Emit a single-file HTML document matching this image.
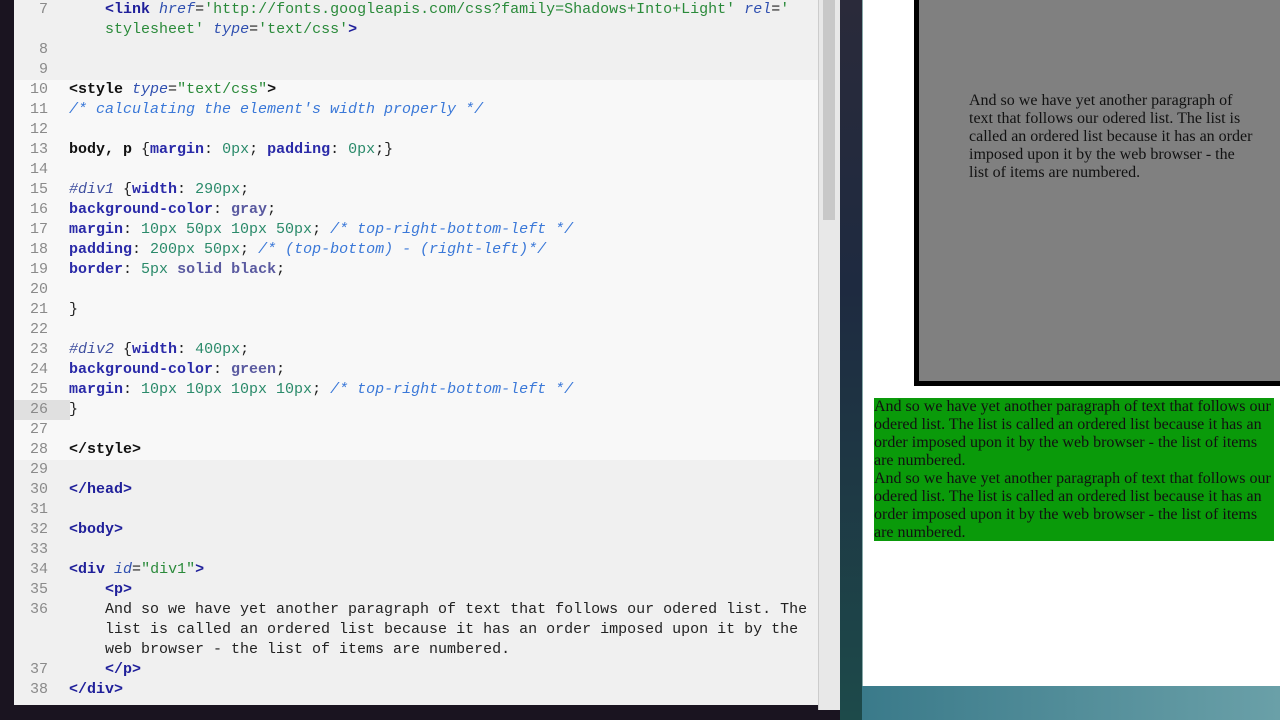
<!DOCTYPE html>
<html><head><meta charset="utf-8"><style>
*{margin:0;padding:0;box-sizing:border-box}
body{width:1280px;height:720px;overflow:hidden;background:#1a1420;position:relative;font-family:"Liberation Mono",monospace}
#ed{position:absolute;left:14px;top:0;width:804px;height:705px;background:#f0f0f0;overflow:hidden}
#band{position:absolute;left:0;top:80px;width:804px;height:380px;background:#f8f8f8}
#sb{position:absolute;left:818px;top:0;width:22px;height:710px;background:#e8e8e8;border-left:1px solid #ccc}
#sbt{position:absolute;left:4px;top:0;width:12px;height:220px;background:#c8c8c8}
.l{position:absolute;left:0;height:20px;line-height:20px;font-size:15px;white-space:pre;color:#222}
.n{position:absolute;width:34px;text-align:right;color:#8a8a8a;font-size:15px;line-height:20px;height:20px}
.t{color:#1f1f9a;font-weight:bold}
.tb{color:#111;font-weight:bold}
.a{color:#3050b0;font-style:italic}
.s{color:#2a8a3a}
.c{color:#3a78d8;font-style:italic}
.p{color:#2a2aa8;font-weight:bold}
.v{color:#2a8a6a}
.k{color:#5a5aa0;font-weight:bold}
.sel{color:#4050a0;font-style:italic}
#strip{position:absolute;left:840px;top:0;width:22px;height:720px;background:linear-gradient(#2a2a3a,#1e2a40 40%,#1d4a4a)}
#br{position:absolute;left:862px;top:0;width:418px;height:686px;background:#fff;border-left:1px solid #8aa}
#bot{position:absolute;left:862px;top:686px;width:418px;height:34px;background:linear-gradient(90deg,#3a7a8a,#6aa0a8)}
#div1{position:absolute;left:914px;top:-20px;width:400px;height:406px;background:#808080;border:5px solid #000}
#div1 p,#div2 p{font-family:"Liberation Serif",serif;line-height:18px;color:#111}
#div1 p{font-size:16px}
#div2 p{font-size:16px}
#div2{position:absolute;left:874px;top:398px;width:400px;height:143px;background:#0a9a0a}
</style></head><body>
<div id="ed">
<div id="band"></div>
<div style="position:absolute;left:0;top:400px;width:56px;height:20px;background:#e0e0e0"></div>
</div>
<div id="sb"><div id="sbt"></div></div>
<div id="strip"></div>
<div id="br"></div>
<div id="bot"></div>
<div id="div1"><p style="position:absolute;left:50px;top:107px;width:285px">And so we have yet another paragraph of text that follows our odered list. The list is called an ordered list because it has an order imposed upon it by the web browser - the list of items are numbered.</p></div>
<div id="div2"><p style="width:400px">And so we have yet another paragraph of text that follows our odered list. The list is called an ordered list because it has an order imposed upon it by the web browser - the list of items are numbered.<br>And so we have yet another paragraph of text that follows our odered list. The list is called an ordered list because it has an order imposed upon it by the web browser - the list of items are numbered.</p></div>

<div style="position:absolute;left:14px;top:0">
<div class="n" style="top:0">7</div><div class="n" style="top:40px">8</div><div class="n" style="top:60px">9</div>
<div class="n" style="top:80px">10</div><div class="n" style="top:100px">11</div><div class="n" style="top:120px">12</div>
<div class="n" style="top:140px">13</div><div class="n" style="top:160px">14</div><div class="n" style="top:180px">15</div>
<div class="n" style="top:200px">16</div><div class="n" style="top:220px">17</div><div class="n" style="top:240px">18</div>
<div class="n" style="top:260px">19</div><div class="n" style="top:280px">20</div><div class="n" style="top:300px">21</div>
<div class="n" style="top:320px">22</div><div class="n" style="top:340px">23</div><div class="n" style="top:360px">24</div>
<div class="n" style="top:380px">25</div><div class="n" style="top:400px">26</div><div class="n" style="top:420px">27</div>
<div class="n" style="top:440px">28</div><div class="n" style="top:460px">29</div><div class="n" style="top:480px">30</div>
<div class="n" style="top:500px">31</div><div class="n" style="top:520px">32</div><div class="n" style="top:540px">33</div>
<div class="n" style="top:560px">34</div><div class="n" style="top:580px">35</div><div class="n" style="top:600px">36</div>
<div class="n" style="top:660px">37</div><div class="n" style="top:680px">38</div>
</div>
<div style="position:absolute;left:69px;top:0">
<div class="l" style="top:0">    <span class="t">&lt;link</span> <span class="a">href</span>=<span class="s">'http://fonts.googleapis.com/css?family=Shadows+Into+Light'</span> <span class="a">rel</span>=<span class="s">'</span></div>
<div class="l" style="top:20px">    <span class="s">stylesheet'</span> <span class="a">type</span>=<span class="s">'text/css'</span><span class="t">&gt;</span></div>
<div class="l" style="top:80px"><span class="tb">&lt;style</span> <span class="a">type</span>=<span class="s">"text/css"</span><span class="tb">&gt;</span></div>
<div class="l" style="top:100px"><span class="c">/* calculating the element's width properly */</span></div>
<div class="l" style="top:140px"><span class="tb">body, p</span> {<span class="p">margin</span>: <span class="v">0px</span>; <span class="p">padding</span>: <span class="v">0px</span>;}</div>
<div class="l" style="top:180px"><span class="sel">#div1</span> {<span class="p">width</span>: <span class="v">290px</span>;</div>
<div class="l" style="top:200px"><span class="p">background-color</span>: <span class="k">gray</span>;</div>
<div class="l" style="top:220px"><span class="p">margin</span>: <span class="v">10px 50px 10px 50px</span>; <span class="c">/* top-right-bottom-left */</span></div>
<div class="l" style="top:240px"><span class="p">padding</span>: <span class="v">200px 50px</span>; <span class="c">/* (top-bottom) - (right-left)*/</span></div>
<div class="l" style="top:260px"><span class="p">border</span>: <span class="v">5px</span> <span class="k">solid black</span>;</div>
<div class="l" style="top:300px">}</div>
<div class="l" style="top:340px"><span class="sel">#div2</span> {<span class="p">width</span>: <span class="v">400px</span>;</div>
<div class="l" style="top:360px"><span class="p">background-color</span>: <span class="k">green</span>;</div>
<div class="l" style="top:380px"><span class="p">margin</span>: <span class="v">10px 10px 10px 10px</span>; <span class="c">/* top-right-bottom-left */</span></div>
<div class="l" style="top:400px">}</div>
<div class="l" style="top:440px"><span class="tb">&lt;/style&gt;</span></div>
<div class="l" style="top:480px"><span class="t">&lt;/head&gt;</span></div>
<div class="l" style="top:520px"><span class="t">&lt;body&gt;</span></div>
<div class="l" style="top:560px"><span class="t">&lt;div</span> <span class="a">id</span>=<span class="s">"div1"</span><span class="t">&gt;</span></div>
<div class="l" style="top:580px">    <span class="t">&lt;p&gt;</span></div>
<div class="l" style="top:600px">    And so we have yet another paragraph of text that follows our odered list. The</div>
<div class="l" style="top:620px">    list is called an ordered list because it has an order imposed upon it by the</div>
<div class="l" style="top:640px">    web browser - the list of items are numbered.</div>
<div class="l" style="top:660px">    <span class="t">&lt;/p&gt;</span></div>
<div class="l" style="top:680px"><span class="t">&lt;/div&gt;</span></div>
</div>
</body></html>
